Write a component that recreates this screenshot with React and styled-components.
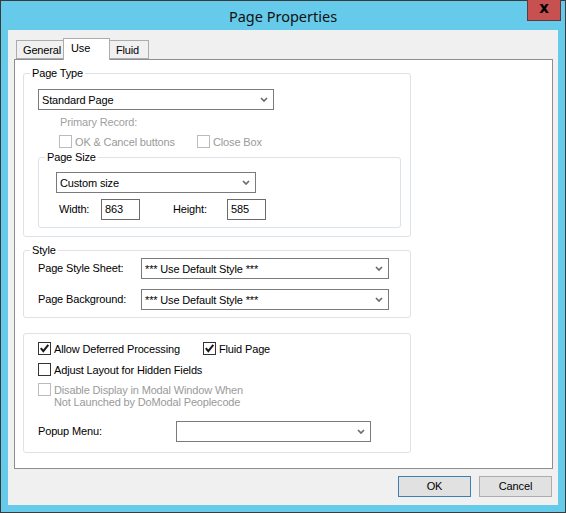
import React from 'react'
import styled, { createGlobalStyle } from 'styled-components'

const Global = createGlobalStyle`
  html, body { margin: 0; padding: 0; background: #fff; }
  body { font-family: "Liberation Sans", Arial, sans-serif; font-size: 11px; letter-spacing: -0.15px; color: #000; }
`

const Chevron = () => (
  <svg width="8" height="5" viewBox="0 0 8 5">
    <path d="M1 1 L4 4 L7 1" fill="none" stroke="#6b6b6b" strokeWidth="1.7" />
  </svg>
)

const Check = () => (
  <svg width="11" height="11" viewBox="0 0 11 11">
    <path d="M1.8 5.2 L4.3 8.2 L9.3 1.8" fill="none" stroke="#1a1a1a" strokeWidth="2" />
  </svg>
)

const CheckBox = ({ checked, disabled, children, width }) => (
  <CheckLabel $disabled={disabled} $width={width}>
    <Box $disabled={disabled}>{checked && <Check />}</Box>
    <span>{children}</span>
  </CheckLabel>
)

const Select = ({ value, width }) => (
  <SelectBox $width={width}>
    <span>{value}</span>
    <Chevron />
  </SelectBox>
)

export default function App() {
  return (
    <>
      <Global />
      <Window>
        <TitleBar>
          <span />
          <Title>Page Properties</Title>
          <CloseButton>x</CloseButton>
        </TitleBar>
        <Client>
          <Tabs>
            <Tab $w={48}>General</Tab>
            <Tab $w={47} $active>Use</Tab>
            <Tab $w={40}>Fluid</Tab>
          </Tabs>
          <Panel>
            <Group $h={164} $pt={15}>
              <Legend>Page Type</Legend>
              <Select value="Standard Page" width={236} />
              <Indent>
                <Muted>Primary Record:</Muted>
                <Row>
                  <CheckBox disabled width={138}>OK &amp; Cancel buttons</CheckBox>
                  <CheckBox disabled>Close Box</CheckBox>
                </Row>
              </Indent>
              <SubGroup>
                <Legend>Page Size</Legend>
                <Select value="Custom size" width={200} />
                <SizeRow>
                  <FieldLabel $w={42}>Width:</FieldLabel>
                  <TextInput>863</TextInput>
                  <FieldLabel $w={54} $ml={33}>Height:</FieldLabel>
                  <TextInput>585</TextInput>
                </SizeRow>
              </SubGroup>
            </Group>

            <Group $h={68} $pt={7} $mt={13}>
              <Legend>Style</Legend>
              <FormGrid $col={103} $gap={10}>
                <FieldLabel>Page Style Sheet:</FieldLabel>
                <Select value="*** Use Default Style ***" width={248} />
                <FieldLabel>Page Background:</FieldLabel>
                <Select value="*** Use Default Style ***" width={248} />
              </FormGrid>
            </Group>

            <Group $h={120} $pt={8} $mt={15}>
              <Row $mt={0}>
                <CheckBox checked width={165}>Allow Deferred Processing</CheckBox>
                <CheckBox checked>Fluid Page</CheckBox>
              </Row>
              <Row $mt={8}>
                <CheckBox>Adjust Layout for Hidden Fields</CheckBox>
              </Row>
              <Row $mt={7}>
                <CheckBox disabled>
                  Disable Display in Modal Window When
                  <br />
                  Not Launched by DoModal Peoplecode
                </CheckBox>
              </Row>
              <FormGrid $col={138} $mt={13}>
                <FieldLabel>Popup Menu:</FieldLabel>
                <Select value="" width={195} />
              </FormGrid>
            </Group>
          </Panel>
          <Buttons>
            <Button $default>OK</Button>
            <Button>Cancel</Button>
          </Buttons>
        </Client>
      </Window>
    </>
  )
}

const Window = styled.div`
  width: 566px;
  height: 513px;
  box-sizing: border-box;
  border: 1px solid #3b3b3b;
  background: #66cbea;
  display: flex;
  flex-direction: column;
  padding: 0 7px 7px 7px;
`
const TitleBar = styled.div`
  height: 29px;
  display: grid;
  grid-template-columns: 1fr auto 1fr;
  align-items: start;
  margin: 0 -7px;
`
const Title = styled.div`
  font-family: "Noto Sans", "Open Sans", sans-serif;
  font-size: 14.5px;
  letter-spacing: 0;
  color: #111;
  line-height: 29px;
  margin-top: 1px;
`
const CloseButton = styled.div`
  justify-self: end;
  margin: -1px 4px 0 0;
  width: 34px;
  height: 21px;
  box-sizing: border-box;
  border: 1px solid #5a3a3a;
  border-top: none;
  background: #c75050;
  color: #000;
  font-family: "DejaVu Sans", sans-serif;
  font-weight: bold;
  font-size: 15px;
  letter-spacing: 0;
  line-height: 17px;
  text-align: center;
`
const Client = styled.div`
  flex: 1;
  background: #f0f0f0;
  padding: 8px 5px 0 6px;
  display: flex;
  flex-direction: column;
`
const Tabs = styled.div`
  height: 21px;
  display: flex;
  align-items: flex-end;
  padding-left: 2px;
  position: relative;
  z-index: 1;
`
const Tab = styled.div`
  width: ${p => p.$w}px;
  box-sizing: border-box;
  height: ${p => (p.$active ? 22 : 19)}px;
  margin-bottom: ${p => (p.$active ? -1 : 0)}px;
  margin-left: -1px;
  border: 1px solid #acacac;
  border-bottom: ${p => (p.$active ? 'none' : '1px solid #acacac')};
  background: ${p => (p.$active ? '#fff' : '#f0f0f0')};
  position: relative;
  z-index: ${p => (p.$active ? 2 : 0)};
  padding: ${p => (p.$active ? '3px 0 0 7px' : '3px 0 0 6px')};
  line-height: 13px;
  &:first-child { margin-left: 0; }
`
const Panel = styled.div`
  height: 410px;
  box-sizing: border-box;
  background: #fff;
  border: 1px solid #8c8e94;
  padding: 13px 0 0 8px;
`
const Group = styled.div`
  position: relative;
  width: 388px;
  height: ${p => p.$h}px;
  box-sizing: border-box;
  margin-top: ${p => p.$mt || 0}px;
  border: 1px solid #dce2e7;
  border-radius: 3px;
  padding: ${p => p.$pt}px 0 0 14px;
`
const SubGroup = styled.div`
  position: relative;
  width: 363px;
  height: 71px;
  box-sizing: border-box;
  margin-top: 9px;
  border: 1px solid #dce2e7;
  border-radius: 3px;
  padding: 14px 0 0 17px;
`
const Legend = styled.div`
  position: absolute;
  top: -7px;
  left: 6px;
  padding: 0 2px;
  background: #fff;
  line-height: 13px;
`
const Indent = styled.div`
  padding-left: 21px;
  margin-top: 6px;
`
const Muted = styled.div`
  color: #a0a0a0;
  line-height: 13px;
  padding-left: 1px;
`
const Row = styled.div`
  display: flex;
  align-items: flex-start;
  margin-top: ${p => (p.$mt === undefined ? 6 : p.$mt)}px;
`
const CheckLabel = styled.label`
  display: flex;
  align-items: flex-start;
  gap: 3px;
  width: ${p => (p.$width ? `${p.$width}px` : 'auto')};
  color: ${p => (p.$disabled ? '#9a9a9a' : '#000')};
  line-height: 12px;
  span { padding-top: 1px; }
`
const Box = styled.span`
  width: 13px;
  height: 13px;
  box-sizing: border-box;
  flex: none;
  background: #fff;
  border: 1px solid ${p => (p.$disabled ? '#bcbcbc' : '#333')};
  display: flex;
  align-items: center;
  justify-content: center;
  && { padding: 0; }
`
const SelectBox = styled.div`
  width: ${p => p.$width}px;
  height: 21px;
  box-sizing: border-box;
  border: 1px solid #7a7a7a;
  background: #fff;
  display: flex;
  align-items: center;
  justify-content: space-between;
  padding: 0 5px 0 3px;
`
const SizeRow = styled.div`
  display: flex;
  align-items: center;
  margin-top: 6px;
  padding-left: 3px;
`
const FieldLabel = styled.div`
  width: ${p => (p.$w ? `${p.$w}px` : 'auto')};
  margin-left: ${p => p.$ml || 0}px;
  line-height: 13px;
`
const TextInput = styled.div`
  width: 39px;
  height: 21px;
  box-sizing: border-box;
  border: 1px solid #6b6b6b;
  padding: 3px 0 0 3px;
  line-height: 13px;
`
const FormGrid = styled.div`
  display: grid;
  grid-template-columns: ${p => p.$col}px auto;
  row-gap: ${p => p.$gap || 0}px;
  align-items: center;
  justify-items: start;
  margin-top: ${p => p.$mt || 0}px;
`
const Buttons = styled.div`
  display: flex;
  justify-content: flex-end;
  gap: 8px;
  margin-top: 7px;
  padding-right: 1px;
`
const Button = styled.div`
  width: 73px;
  height: 21px;
  box-sizing: border-box;
  border: 1px solid ${p => (p.$default ? '#3c7fb1' : '#adadad')};
  background: #e1e1e1;
  text-align: center;
  line-height: 19px;
`
